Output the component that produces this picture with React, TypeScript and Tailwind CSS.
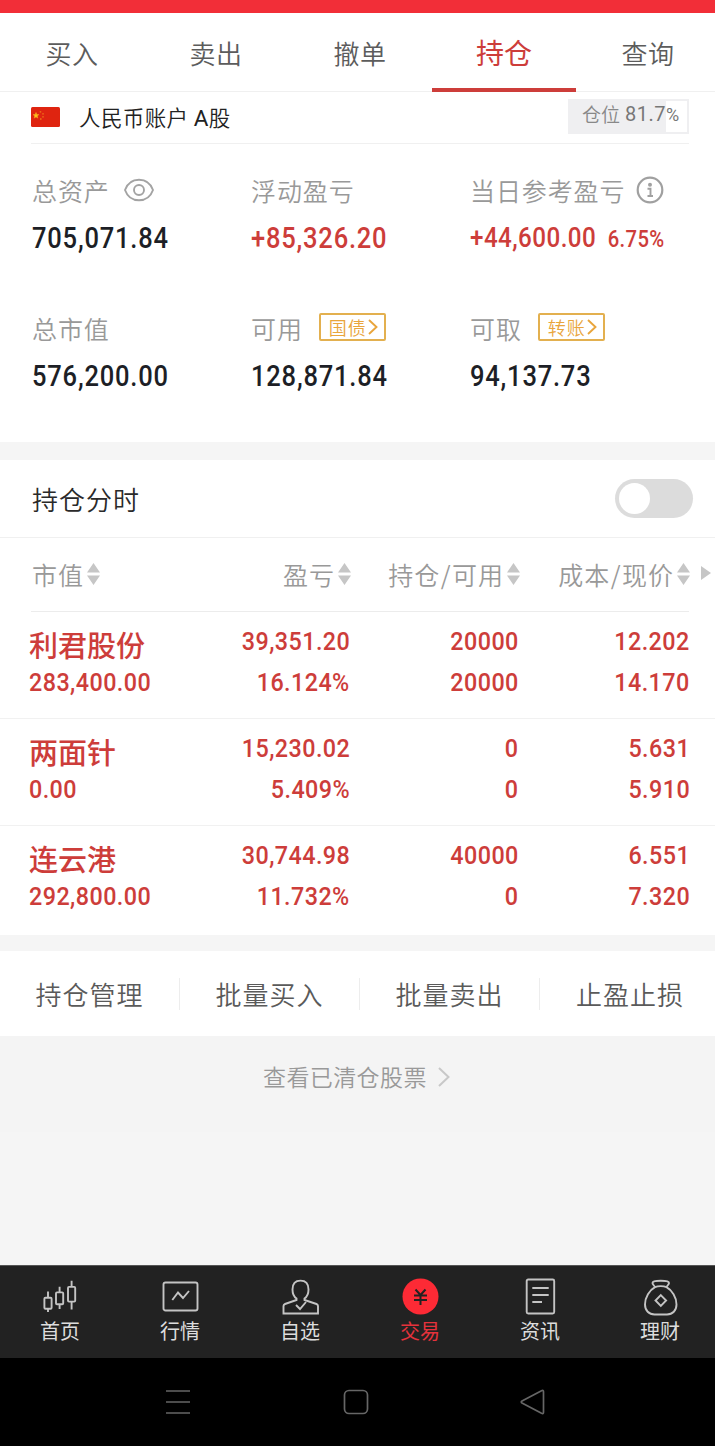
import React from "react";

const RED = "text-[#cd3d3a]";
const CJK = "font-['Noto_Sans_CJK_SC',sans-serif]";
const NUM = "font-[Roboto,sans-serif] font-medium whitespace-nowrap";

const tabs = ["买入", "卖出", "撤单", "持仓", "查询"];

type Holding = {
  name: string;
  value: string;
  profit: [string, string];
  amount: [string, string];
  price: [string, string];
};

const holdings: Holding[] = [
  { name: "利君股份", value: "283,400.00", profit: ["39,351.20", "16.124%"], amount: ["20000", "20000"], price: ["12.202", "14.170"] },
  { name: "两面针", value: "0.00", profit: ["15,230.02", "5.409%"], amount: ["0", "0"], price: ["5.631", "5.910"] },
  { name: "连云港", value: "292,800.00", profit: ["30,744.98", "11.732%"], amount: ["40000", "0"], price: ["6.551", "7.320"] },
];

function Flag() {
  return (
    <svg width="29" height="20" viewBox="0 0 29 20" className="-mt-[2px] shrink-0">
      <rect width="29" height="20" rx="1.5" fill="#df2410" />
      <path d="M5 5.500l.8 2 2.100.1-1.600 1.400.5 2.100L5 9.900l-1.800 1.200.5-2.100L2.100 7.600l2.100-.1z" fill="#fcc419" stroke="#f6a01c" strokeWidth="0.600" />
      <g fill="#ec6a18">
        <circle cx="9.500" cy="4.800" r=".9" />
        <circle cx="12" cy="6.800" r=".9" />
        <circle cx="12" cy="9.800" r=".9" />
        <circle cx="9.800" cy="12" r=".9" />
      </g>
    </svg>
  );
}

function Eye() {
  return (
    <svg width="30" height="24" viewBox="0 0 30 24" fill="none" stroke="#a3a3a3" strokeWidth="1.9">
      <path d="M1 12C3.500 5 9 1.700 15 1.700S26.500 5 29 12c-2.500 7-8 10.300-14 10.300S3.500 19 1 12z" />
      <circle cx="15" cy="12" r="5" />
    </svg>
  );
}

function Info() {
  return (
    <svg width="28" height="28" viewBox="0 0 28 28" fill="none" stroke="#a0a0a0">
      <circle cx="14" cy="14" r="12.300" strokeWidth="2.200" />
      <circle cx="14" cy="8.700" r="2" fill="#a0a0a0" stroke="none" />
      <path d="M11.500 12.800h3v7M11.500 20h5.500" strokeWidth="1.900" />
    </svg>
  );
}

function LinkTag({ children }: { children: string }) {
  return (
    <span className="mb-[2px] ml-[16px] flex h-7 w-[67px] items-center rounded-[2px] border-2 border-[#e3b04f] pl-2 text-[18px] leading-6 text-[#e9a53c]">
      {children}
      <svg width="10" height="16" viewBox="0 0 10 16" fill="none" stroke="#e9a53c" strokeWidth="1.900" className="ml-px shrink-0">
        <path d="M1 1l7.500 7L1 15" />
      </svg>
    </span>
  );
}

function Sort() {
  return (
    <svg width="13" height="22" viewBox="0 0 13 22" fill="#c6c6c6" className="-mt-[2px] ml-[3px] shrink-0">
      <path d="M6.500 0L13 9.500H0zM6.500 22L13 12.500H0z" />
    </svg>
  );
}

function Stat({ label, extra, value, valueClass = "text-[#1d1f26]", suffix }: { label: string; extra?: React.ReactNode; value: string; valueClass?: string; suffix?: string }) {
  return (
    <div className="w-[219px]">
      <div className="flex h-9 items-center text-[25px] leading-[34px] tracking-[0.9px] whitespace-nowrap text-[#999]">
        <span className="-mt-px">{label}</span>
        {extra}
      </div>
      <div className={`${NUM} mt-3 flex h-9 origin-left scale-x-[.88] items-baseline leading-9 ${suffix ? "text-[27.500px] tracking-[0.5px]" : "text-[29px] tracking-[0.9px]"} ${valueClass}`}>
        {value}
        {suffix && <span className="ml-[13px] text-[23px] tracking-[0.4px]">{suffix}</span>}
      </div>
    </div>
  );
}

function Pair({ values, className }: { values: [string, string]; className: string }) {
  return (
    <div className={`${NUM} ${className} flex flex-col items-end pt-[8px] text-[26.500px] leading-[41px] tracking-[0.5px]`}>
      <span className="origin-right scale-x-[.88]">{values[0]}</span>
      <span className="origin-right scale-x-[.88]">{values[1]}</span>
    </div>
  );
}

const line = { fill: "none", stroke: "#c4c4c4", strokeWidth: 1.9 };

const navItems = [
  {
    label: "首页",
    icon: (
      <g {...line}>
        <rect x="2.400" y="19.700" width="7.200" height="11" rx="1" />
        <path d="M6 13.500v6M6 30.500v3.500" />
        <rect x="14" y="14.400" width="7.200" height="11.900" rx="1" />
        <path d="M17.600 8.800v5.500M17.600 26.500v4.500" />
        <rect x="26" y="8.900" width="7.200" height="14.700" rx="1" />
        <path d="M29.600 2.700v6M29.600 23.500v8" />
      </g>
    ),
  },
  {
    label: "行情",
    icon: (
      <g {...line}>
        <rect x="1.500" y="4.500" width="34" height="28" rx="2" />
        <path d="M10.300 22l5.700-7.500 5 5.500 6-7" />
      </g>
    ),
  },
  {
    label: "自选",
    icon: (
      <g {...line}>
        <path d="M14.500 20.500c-3-2-4-5-4-9 0-6 3.300-8.900 8-8.900s8 2.900 8 8.900c0 4-1 7-4 9V22l12 4c1 .4 1.500 1 1.500 2v7.500H1.500V28c0-1 .5-1.600 1.500-2l11.500-4z" />
        <path d="M14 27l4 4 6-7" />
      </g>
    ),
  },
  {
    label: "交易",
    active: true,
    icon: (
      <g>
        <circle cx="18.500" cy="18.500" r="18" fill="#fd2a35" />
        <path d="M13.500 11.500l5 5.500 5-5.500M12 17.500h13M12 22h13M18.500 17v10" fill="none" stroke="#222" strokeWidth="2" />
      </g>
    ),
  },
  {
    label: "资讯",
    icon: (
      <g {...line}>
        <rect x="4.700" y="1.500" width="27.500" height="34" rx="1.500" />
        <path d="M10.300 10H26.700M10.300 17H26.700M10.300 24h9.700" />
      </g>
    ),
  },
  {
    label: "理财",
    icon: (
      <g {...line} transform="translate(0 -0.5)">
        <path d="M13 9.700C12 7.500 10.500 7 10.500 5.500c0-3 16.500-3 16.500 0 0 1.500-1.500 2-2.500 4.200M13 9.700c3-1.400 8.500-1.400 11.500 0 5.500 3 10 10 10 17.300 0 6-4 10-9.500 10H12.500c-5.500 0-9.500-4-9.500-10 0-7.300 4.500-14.300 10-17.300z" />
        <path d="M18.800 17.700l5.300 5.300-5.300 5.300-5.300-5.300z" />
      </g>
    ),
  },
];

export default function App() {
  return (
    <div className={`${CJK} h-[1446px] w-[715px] overflow-hidden bg-[#f5f5f5] font-[350]`}>
      <div className="w-[720px]">
        <div className="h-[13px] bg-[#f22e38]" />

        <nav className="flex h-[79px] border-b border-[#f0f0f0] bg-white">
          {tabs.map((t) => (
            <div
              key={t}
              className={
                t === "持仓"
                  ? "h-[79px] w-36 border-b-[4px] border-[#cd3d3a] text-center text-[28px] leading-[79px] font-normal text-[#cd3d3a]"
                  : "h-[79px] w-36 text-center text-[26px] leading-[79px] tracking-[0.5px] text-[#5c5c5c]"
              }
            >
              {t}
            </div>
          ))}
        </nav>

        <section className="h-[350px] bg-white pl-[31px]">
          <div className="flex h-[52px] w-[658px] items-start border-b border-[#f0f0f0]">
            <div className="flex h-[51px] items-center">
              <Flag />
              <span className="ml-[19px] text-[21.500px] leading-[50px] tracking-[0.4px] text-[#222]">
                人民币账户 <span className="font-[Roboto,'Noto_Sans_CJK_SC',sans-serif] text-[22.500px] font-normal">A</span>股
              </span>
            </div>
            <div className="mt-[7px] ml-auto flex h-[35px] w-[121px] border-2 border-[#efeff1] bg-[linear-gradient(to_right,#efeff1_96px,#fff_96px)] pl-3 text-[19px] leading-[26px] whitespace-nowrap text-[#888]">
              仓位
              <span className="ml-[5px] font-[Roboto,sans-serif] text-[20px] font-normal tracking-[0.5px] text-[#777]">
                81.7<span className="text-[18px] tracking-normal">%</span>
              </span>
            </div>
          </div>
          <div className="flex flex-wrap gap-y-[54px] pt-7 pl-px">
            <Stat label="总资产" extra={<span className="ml-[14px]"><Eye /></span>} value="705,071.84" />
            <Stat label="浮动盈亏" value="+85,326.20" valueClass={RED} />
            <Stat label="当日参考盈亏" extra={<span className="ml-[11px]"><Info /></span>} value="+44,600.00" valueClass={RED} suffix="6.75%" />
            <Stat label="总市值" value="576,200.00" />
            <Stat label="可用" extra={<LinkTag>国债</LinkTag>} value="128,871.84" />
            <Stat label="可取" extra={<LinkTag>转账</LinkTag>} value="94,137.73" />
          </div>
        </section>

        <section className="mt-[18px] bg-white">
          <div className="flex h-[78px] items-center border-b border-[#f0f0f0] pr-[27px] pl-8">
            <span className="text-[26px] tracking-[1px] text-[#2a2a2a]">持仓分时</span>
            <span className="ml-auto flex h-[39px] w-[78px] items-center rounded-full bg-[#dcdcdc] pl-[3.500px]">
              <span className="size-[31px] rounded-full bg-white" />
            </span>
          </div>
          <div className="flex h-[73px] items-center pl-8 text-[25px] leading-9 tracking-[1px] whitespace-nowrap text-[#999]">
            <span className="flex items-center"><span className="-mt-[2px]">市值</span><Sort /></span>
            <span className="ml-auto flex items-center"><span className="-mt-[2px]">盈亏</span><Sort /></span>
            <span className="flex w-[169px] items-center justify-end"><span className="-mt-[2px]">持仓<span className="px-[0.500px]">/</span>可用</span><Sort /></span>
            <span className="flex w-[170px] items-center justify-end"><span className="-mt-[2px]">成本<span className="px-[0.500px]">/</span>现价</span><Sort /></span>
            <svg width="10" height="14" viewBox="0 0 10 14" fill="#c6c6c6" className="-mt-[3px] mr-[9px] ml-[11px]">
              <path d="M0 0l10 7-10 7z" />
            </svg>
          </div>
          {holdings.map((h, i) => (
            <div key={h.name} className={i === 2 ? "h-[110px]" : "h-[107px]"}>
              <div className={i === 0 ? "mr-[31px] ml-[31px] h-px bg-[#ececec]" : "h-px bg-[#f1f1f1]"} />
              <div className={`flex pl-[29px] ${RED}`}>
                <div className="w-[180px] pt-[11px]">
                  <div className="pt-1 text-[29px] leading-[35px] font-medium">{h.name}</div>
                  <div className={`${NUM} -mt-px origin-left scale-x-[.88] text-[26.500px] leading-[41px] tracking-[0.5px]`}>{h.value}</div>
                </div>
                <Pair values={h.profit} className="w-[141px]" />
                <Pair values={h.amount} className="w-[169px]" />
                <Pair values={h.price} className="w-[171px]" />
              </div>
            </div>
          ))}
        </section>

        <section className="mt-4 flex h-[85px] items-center bg-white">
          {["持仓管理", "批量买入", "批量卖出", "止盈止损"].map((a, i) => (
            <div key={a} className={`flex h-8 w-[180px] items-center justify-center text-[26px] tracking-[1px] text-[#5a5a5a] ${i < 3 ? "border-r border-[#ededed]" : ""}`}>
              {a}
            </div>
          ))}
        </section>

        <div className="flex h-[96px] items-start bg-[#f4f4f4] pt-[22px] pl-[263px] text-[23px] leading-9 tracking-[0.4px] text-[#999]">
          查看已清仓股票
          <svg width="12" height="20" viewBox="0 0 12 20" fill="none" stroke="#c8c8c8" strokeWidth="2" className="mt-[9px] ml-[11px]">
            <path d="M1 1l9.500 9L1 19" />
          </svg>
        </div>
        <div className="h-[133px]" />

        <nav className="flex h-[93px] border-t border-[#555] bg-[#222]">
          {navItems.map((n) => (
            <div key={n.label} className={`flex w-[120px] flex-col items-center pt-[12px] text-[20px] leading-[30px] font-normal ${n.active ? "text-[#e5323c]" : "text-[#ddd]"}`}>
              <svg width="37" height="38" viewBox="0 0 37 38">{n.icon}</svg>
              <span>{n.label}</span>
            </div>
          ))}
        </nav>

        <div className="flex h-[88px] items-center bg-black pl-[165px]">
          <svg width="26" height="26" viewBox="0 0 26 26" fill="none" stroke="#666" strokeWidth="1.700">
            <path d="M1 2h24M1 13h24M1 24h24" />
          </svg>
          <svg width="26" height="26" viewBox="0 0 26 26" fill="none" stroke="#666" strokeWidth="1.700" className="ml-[152px]">
            <rect x="1.500" y="1.500" width="23" height="23" rx="4.500" />
          </svg>
          <svg width="26" height="26" viewBox="0 0 26 26" fill="none" stroke="#666" strokeWidth="1.700" strokeLinejoin="round" className="ml-[151px]">
            <path d="M2 12L21.500 1.800q2-1 2 1v20.500q0 2-2 1L2 14q-1.500-1 0-2z" />
          </svg>
        </div>
      </div>
    </div>
  );
}
